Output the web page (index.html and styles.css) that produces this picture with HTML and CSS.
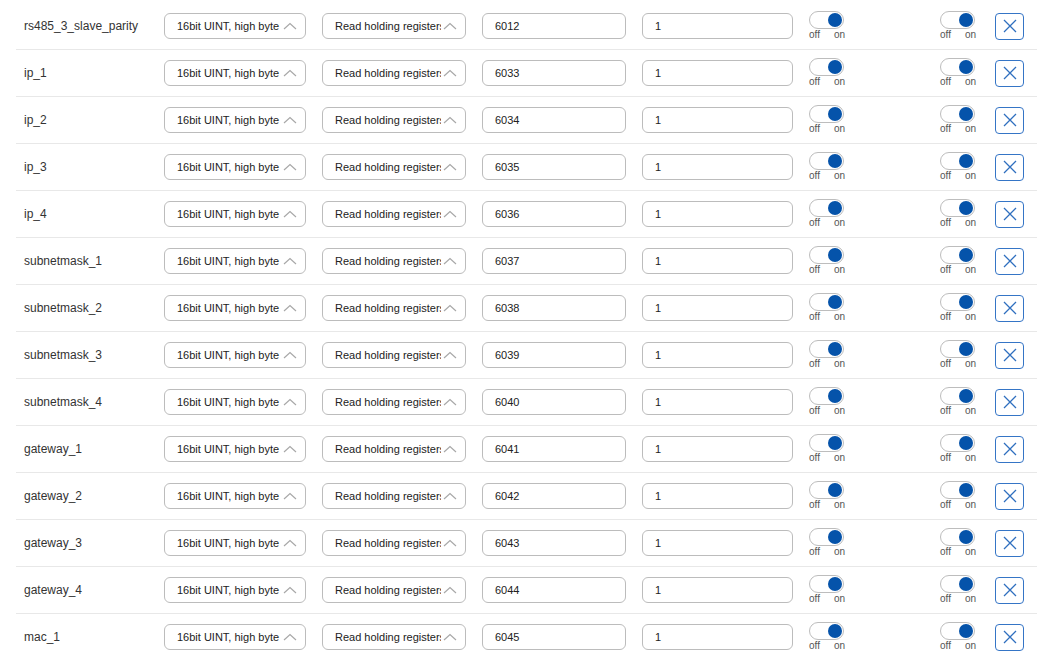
FILE: index.html
```html
<!DOCTYPE html>
<html lang="en">
<head>
    <meta charset="UTF-8">
    <meta name="viewport" content="width=device-width, initial-scale=1.0">
    <title>Modbus registers</title>
    <link rel="stylesheet" href="styles.css">
</head>
<body>

    <div class="register-list"></div>

    <script>
        const registers = [
            ["rs485_3_slave_parity", 6012],
            ["ip_1", 6033],
            ["ip_2", 6034],
            ["ip_3", 6035],
            ["ip_4", 6036],
            ["subnetmask_1", 6037],
            ["subnetmask_2", 6038],
            ["subnetmask_3", 6039],
            ["subnetmask_4", 6040],
            ["gateway_1", 6041],
            ["gateway_2", 6042],
            ["gateway_3", 6043],
            ["gateway_4", 6044],
            ["mac_1", 6045]
        ];

        const chevron = '<svg class="chevron" width="14" height="8" viewBox="0 0 14 8"><path d="M1 7 L7 1.5 L13 7" fill="none" stroke="#a8a8a8" stroke-width="1.2"/></svg>';
        const cross = '<svg width="14" height="14" viewBox="0 0 14 14"><path d="M1 1 L13 13 M13 1 L1 13" stroke="#2f6fbf" stroke-width="1.3"/></svg>';

        function select(text) {
            return '<div class="select"><span class="select-value">' + text + '</span>' + chevron + '</div>';
        }

        function toggle() {
            return '<div class="switch"><span class="track"><span class="knob"></span></span>' +
                '<span class="switch-labels"><span>off</span><span>on</span></span></div>';
        }

        const list = document.querySelector(".register-list");

        registers.forEach(([name, address]) => {
            const row = document.createElement("div");
            row.classList.add("row");
            row.innerHTML =
                '<div class="name">' + name + '</div>' +
                select("16bit UINT, high byte") +
                select("Read holding registers") +
                '<input class="field" type="text" value="' + address + '">' +
                '<input class="field" type="text" value="1">' +
                toggle() +
                toggle() +
                '<button class="remove">' + cross + '</button>';
            list.appendChild(row);
        });
    </script>

</body>
</html>
```

FILE: styles.css
```css
* {
    box-sizing: border-box;
    margin: 0;
    padding: 0;
}

body {
    background: #fff;
    font-family: "Liberation Sans", Arial, sans-serif;
    color: #333;
    padding: 3px 19px 0 16px;
}

.row {
    display: grid;
    grid-template-columns: 124px 142px 144px 144px 151px 115px 39px 29px;
    column-gap: 16px;
    align-items: center;
    height: 47px;
    padding-left: 8px;
    border-bottom: 1px solid #e8e8e8;
}

.name {
    font-size: 12px;
    color: #333;
}

.select,
.field {
    height: 26px;
    border: 1px solid #bcbcbc;
    border-radius: 6px;
    background: #fff;
}

.select {
    display: flex;
    align-items: center;
    padding: 0 8px 0 12px;
    gap: 2px;
}

.select-value {
    flex: 1;
    overflow: hidden;
    white-space: nowrap;
    font-size: 11px;
    color: #222;
}

.chevron {
    flex-shrink: 0;
}

.field {
    width: 100%;
    padding: 0 12px;
    font-family: inherit;
    font-size: 11px;
    color: #222;
    outline: none;
}

/* on/off switch */
.switch {
    display: flex;
    flex-direction: column;
    width: 36px;
}

.track {
    position: relative;
    width: 35px;
    height: 18px;
    border: 1px solid #bdbdbd;
    border-radius: 9px;
    background: #fff;
}

.knob {
    position: absolute;
    top: 1px;
    right: 1px;
    width: 14px;
    height: 14px;
    border-radius: 50%;
    background: #0553aa;
}

.switch-labels {
    display: flex;
    justify-content: space-between;
    font-size: 10px;
    line-height: 12px;
    color: #555;
}

.remove {
    display: flex;
    align-items: center;
    justify-content: center;
    width: 29px;
    height: 27px;
    border: 1.5px solid #3575c6;
    border-radius: 4px;
    background: #fff;
    cursor: pointer;
}
```
